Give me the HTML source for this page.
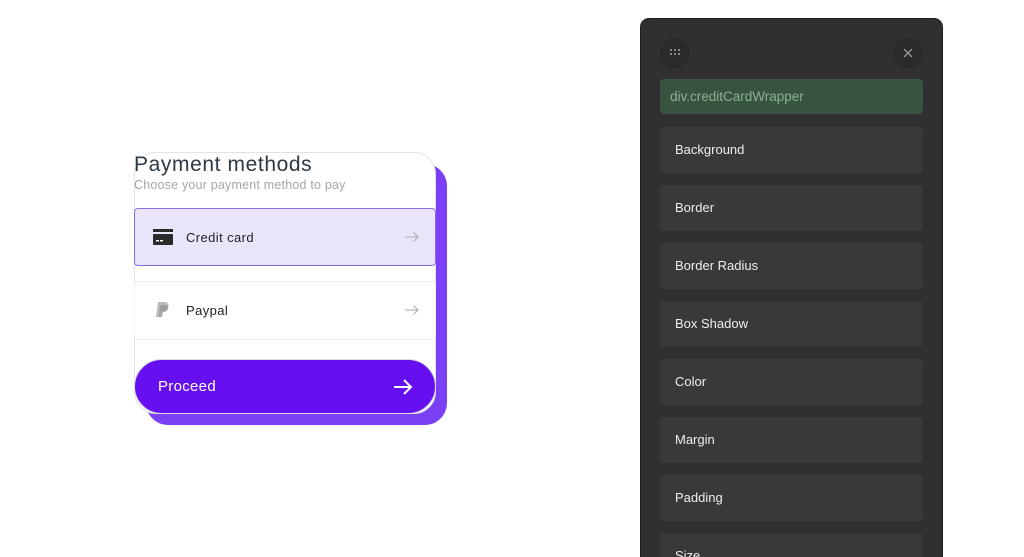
<!DOCTYPE html>
<html style="overflow:hidden;height:557px"><head><style>
body{margin:0;width:1024px;height:557px;background:#fff;position:relative;overflow:hidden;font-family:"Liberation Sans",sans-serif}
.abs{position:absolute}
.shadow{left:146px;top:164px;width:301px;height:261px;background:#7b3ff5;border-radius:22px}
.card{left:134px;top:152px;width:302px;height:262px;background:#fff;border:1px solid #e2e2e2;border-radius:22px;box-sizing:border-box}
h1{position:absolute;left:134px;top:153px;margin:0;font-size:21px;font-weight:normal;color:#2d3a45;letter-spacing:.6px}
.sub{left:134px;top:178px;font-size:12.5px;color:#a5a5a5;letter-spacing:.2px}
.item{left:134px;width:302px;box-sizing:border-box;font-size:13px;color:#222;letter-spacing:.4px}
.cc{top:208px;height:58px;background:#ebe5fc;border:1px solid #8a6ae6;border-radius:4px}
.pp{top:281px;height:59px;border-top:1px solid #eee;border-bottom:1px solid #eee;border-left:1px solid #f4f4f4;border-right:1px solid #f4f4f4;border-radius:4px}
.lbl{position:absolute;left:51px;top:21px}
.arr{position:absolute;right:16px;top:23px}
.btn{left:134px;top:359px;width:302px;height:55px;background:#6610f2;border-radius:28px;border:1px solid #ddd;box-sizing:border-box;color:#fff;font-size:15px;letter-spacing:.3px}
.panel{left:640px;top:18px;width:303px;height:560px;background:#303030;border:1px solid #1e1e1e;border-radius:9px;box-sizing:border-box}
.circ{width:30px;height:30px;border-radius:50%;background:#2a2a2a;top:38px}
.row{left:660px;width:263px;height:46px;background:#393939;border-radius:4px;color:#eee;font-size:13px;line-height:46px;text-indent:15px}
.green{left:660px;top:79px;width:263px;height:35px;background:#38533f;border-radius:4px;color:#86b592;font-size:13.5px;line-height:35px;text-indent:10px}
</style></head><body>
<div class="abs shadow"></div>
<div class="abs card"></div>
<h1>Payment methods</h1>
<div class="abs sub">Choose your payment method to pay</div>
<div class="abs item cc">
<svg class="abs" style="left:18px;top:20px" width="20" height="16" viewBox="0 0 20 16"><rect x="0" y="0" width="20" height="3" fill="#2b2b2b"/><rect x="0" y="5" width="20" height="11" rx="1" fill="#2b2b2b"/><rect x="3" y="11" width="3" height="1.5" fill="#fff"/><rect x="7" y="11" width="3" height="1.5" fill="#fff"/></svg>
<span class="lbl">Credit card</span><svg class="arr" width="14" height="10" viewBox="0 0 14 10"><path d="M0 5h13M8.5 0.5L13 5l-4.5 4.5" stroke="#aaa" stroke-width="1" fill="none"/></svg></div>
<div class="abs item pp">
<svg class="abs" style="left:21px;top:20px" width="14" height="16" viewBox="0 0 14 16"><path d="M2 0h6c3 0 5 1.5 4.5 4.5S9 9 6.5 9H5l-1 6H0z" fill="#bbb"/><path d="M4 3h5c2 0 3 1 3 3s-2 4-4 4H7l-1 5H3z" fill="#999" opacity=".8"/></svg>
<span class="lbl">Paypal</span><svg class="arr" width="14" height="10" viewBox="0 0 14 10"><path d="M0 5h13M8.5 0.5L13 5l-4.5 4.5" stroke="#aaa" stroke-width="1" fill="none"/></svg></div>
<div class="abs btn"><span class="abs" style="left:23px;top:18px">Proceed</span>
<svg class="abs" style="right:22px;top:18px" width="20" height="18" viewBox="0 0 20 18"><path d="M1 9h17M11 2l7 7-7 7" stroke="#fff" stroke-width="2" fill="none"/></svg></div>
<div class="abs panel"></div>
<div class="abs circ" style="left:660px"><svg class="abs" style="left:10px;top:11px" width="10" height="8"><g fill="#888"><rect x="0" y="0" width="2" height="2"/><rect x="4" y="0" width="2" height="2"/><rect x="8" y="0" width="2" height="2"/><rect x="0" y="4" width="2" height="2"/><rect x="4" y="4" width="2" height="2"/><rect x="8" y="4" width="2" height="2"/></g></svg></div>
<div class="abs circ" style="left:893px"><svg class="abs" style="left:10px;top:10px" width="10" height="10"><path d="M1 1l8 8M9 1l-8 8" stroke="#999" stroke-width="1.3"/></svg></div>
<div class="abs green">div.creditCardWrapper</div>
<div class="abs row" style="top:127px">Background</div>
<div class="abs row" style="top:185px">Border</div>
<div class="abs row" style="top:243px">Border Radius</div>
<div class="abs row" style="top:301px">Box Shadow</div>
<div class="abs row" style="top:359px">Color</div>
<div class="abs row" style="top:417px">Margin</div>
<div class="abs row" style="top:475px">Padding</div>
<div class="abs row" style="top:533px">Size</div>
</body></html>
